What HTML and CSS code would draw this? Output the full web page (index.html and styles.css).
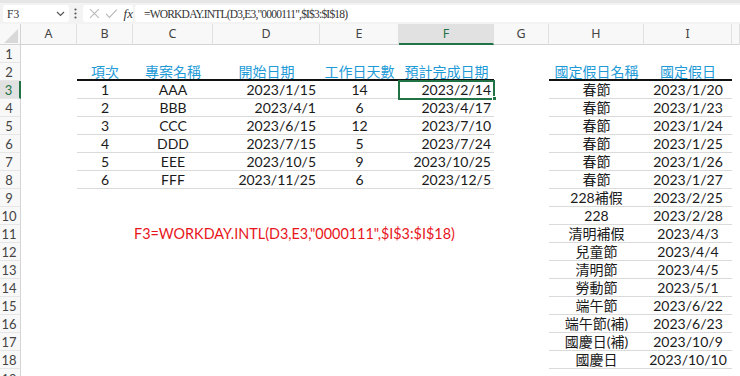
FILE: index.html
```html
<!DOCTYPE html>
<html lang="zh-Hant">
<head>
<meta charset="utf-8">
<title>WORKDAY.INTL</title>
<link rel="stylesheet" href="styles.css">
</head>
<body>
<div class="fbar">
  <div class="namebox">
    <span class="name">F3</span>
    <svg class="chev" width="9" height="6" viewBox="0 0 9 6"><path d="M1 1 L4.5 4.5 L8 1" fill="none" stroke="#555" stroke-width="1.2"/></svg>
  </div>
  <svg class="grip" width="3" height="11" viewBox="0 0 3 11"><circle cx="1.5" cy="1.5" r="1.1" fill="#555"/><circle cx="1.5" cy="5.5" r="1.1" fill="#555"/><circle cx="1.5" cy="9.5" r="1.1" fill="#555"/></svg>
  <div class="fbtns">
    <svg width="11" height="11" viewBox="0 0 11 11"><path d="M1 1 L10 10 M10 1 L1 10" stroke="#b8b8b8" stroke-width="1.1" fill="none"/></svg>
    <svg width="13" height="11" viewBox="0 0 13 11"><path d="M1 6 L4.5 9.5 L12 1.5" stroke="#b8b8b8" stroke-width="1.1" fill="none"/></svg>
    <span class="fx">fx</span>
  </div>
  <div class="finput">=WORKDAY.INTL(D3,E3,"0000111",$I$3:$I$18)</div>
</div>

<div class="sheet">
  <div class="row colhdr">
    <div class="corner"><span class="tri"></span></div>
    <div class="ch">A</div><div class="ch">B</div><div class="ch">C</div><div class="ch">D</div><div class="ch">E</div>
    <div class="ch sel">F</div><div class="ch">G</div><div class="ch">H</div><div class="ch">I</div><div class="ch"></div>
  </div>

  <div class="row"><div class="rh">1</div></div>

  <div class="row">
    <div class="rh">2</div>
    <div class="c cb hd">項次</div><div class="c cc hd">專案名稱</div><div class="c cd hd ctr">開始日期</div>
    <div class="c ce hd">工作日天數</div><div class="c cf hd ctr">預計完成日期</div>
    <div class="c ch2 hd">國定假日名稱</div><div class="c ci hd">國定假日</div>
  </div>

  <div class="row">
    <div class="rh rsel">3</div>
    <div class="c cb t">1</div><div class="c cc t">AAA</div><div class="c cd t r">2023/1/15</div>
    <div class="c ce t">14</div><div class="c cf t r active">2023/2/14<span class="handle"></span></div>
    <div class="c ch2 t">春節</div><div class="c ci t">2023/1/20</div>
  </div>

  <div class="row">
    <div class="rh">4</div>
    <div class="c cb t">2</div><div class="c cc t">BBB</div><div class="c cd t r">2023/4/1</div>
    <div class="c ce t">6</div><div class="c cf t r">2023/4/17</div>
    <div class="c ch2 t">春節</div><div class="c ci t">2023/1/23</div>
  </div>

  <div class="row">
    <div class="rh">5</div>
    <div class="c cb t">3</div><div class="c cc t">CCC</div><div class="c cd t r">2023/6/15</div>
    <div class="c ce t">12</div><div class="c cf t r">2023/7/10</div>
    <div class="c ch2 t">春節</div><div class="c ci t">2023/1/24</div>
  </div>

  <div class="row">
    <div class="rh">6</div>
    <div class="c cb t">4</div><div class="c cc t">DDD</div><div class="c cd t r">2023/7/15</div>
    <div class="c ce t">5</div><div class="c cf t r">2023/7/24</div>
    <div class="c ch2 t">春節</div><div class="c ci t">2023/1/25</div>
  </div>

  <div class="row">
    <div class="rh">7</div>
    <div class="c cb t">5</div><div class="c cc t">EEE</div><div class="c cd t r">2023/10/5</div>
    <div class="c ce t">9</div><div class="c cf t r">2023/10/25</div>
    <div class="c ch2 t">春節</div><div class="c ci t">2023/1/26</div>
  </div>

  <div class="row">
    <div class="rh">8</div>
    <div class="c cb t">6</div><div class="c cc t">FFF</div><div class="c cd t r">2023/11/25</div>
    <div class="c ce t">6</div><div class="c cf t r">2023/12/5</div>
    <div class="c ch2 t">春節</div><div class="c ci t">2023/1/27</div>
  </div>

  <div class="row">
    <div class="rh">9</div>
    <div class="c ch2 t">228補假</div><div class="c ci t">2023/2/25</div>
  </div>

  <div class="row">
    <div class="rh">10</div>
    <div class="c ch2 t">228</div><div class="c ci t">2023/2/28</div>
  </div>

  <div class="row">
    <div class="rh">11</div>
    <div class="c cc note">F3=WORKDAY.INTL(D3,E3,"0000111",$I$3:$I$18)</div>
    <div class="c ch2 t">清明補假</div><div class="c ci t">2023/4/3</div>
  </div>

  <div class="row">
    <div class="rh">12</div>
    <div class="c ch2 t">兒童節</div><div class="c ci t">2023/4/4</div>
  </div>

  <div class="row">
    <div class="rh">13</div>
    <div class="c ch2 t">清明節</div><div class="c ci t">2023/4/5</div>
  </div>

  <div class="row">
    <div class="rh">14</div>
    <div class="c ch2 t">勞動節</div><div class="c ci t">2023/5/1</div>
  </div>

  <div class="row">
    <div class="rh">15</div>
    <div class="c ch2 t">端午節</div><div class="c ci t">2023/6/22</div>
  </div>

  <div class="row">
    <div class="rh">16</div>
    <div class="c ch2 t">端午節(補)</div><div class="c ci t">2023/6/23</div>
  </div>

  <div class="row">
    <div class="rh">17</div>
    <div class="c ch2 t">國慶日(補)</div><div class="c ci t">2023/10/9</div>
  </div>

  <div class="row">
    <div class="rh">18</div>
    <div class="c ch2 t">國慶日</div><div class="c ci t">2023/10/10</div>
  </div>

  <div class="row">
    <div class="rh rcut">19</div>
  </div>
</div>
</body>
</html>
```

FILE: styles.css
```css
* { box-sizing: border-box; }

html, body {
  margin: 0;
  padding: 0;
  background: #ffffff;
  overflow: hidden;
}

body {
  width: 740px;
  height: 376px;
  font-family: "Lato", "Noto Sans CJK TC", sans-serif;
  color: #222;
}

/* ---------- formula bar ---------- */
.fbar {
  height: 24px;
  display: flex;
  align-items: center;
  padding: 0 0 0 3px;
  background: #f3f3f3;
  border-top: 3px solid #e6e6e6;
}

.namebox {
  width: 66px;
  height: 17px;
  background: #fff;
  border-radius: 3px;
  display: flex;
  align-items: center;
  justify-content: space-between;
  padding: 0 4px;
}

.name, .finput {
  font-family: "Liberation Serif", serif;
  font-size: 11.5px;
  color: #333;
}

.grip {
  margin: 0 6px 0 5px;
}

.fbtns {
  width: 50px;
  height: 17px;
  background: #fff;
  border-radius: 3px;
  display: flex;
  align-items: center;
  gap: 5px;
  padding-left: 6px;
}

.fx {
  font-family: "Liberation Serif", serif;
  font-style: italic;
  font-size: 13px;
  color: #333;
  margin-left: 1px;
}

.finput {
  flex: 1;
  height: 17px;
  margin-left: 2px;
  background: #fff;
  border-radius: 3px 0 0 3px;
  display: flex;
  align-items: center;
  padding-left: 9px;
  letter-spacing: -0.8px;
  white-space: nowrap;
}

/* ---------- sheet ---------- */
.sheet {
  display: flex;
  flex-direction: column;
}

.row {
  display: grid;
  grid-template-columns: 21px 56px 56px 80px 107px 79px 95px 55px 95px 88px 1fr;
  grid-template-rows: 18px;
  height: 18px;
}

.row.colhdr {
  height: 21px;
  grid-template-rows: 21px;
  background: #f8f8f8;
  border-bottom: 1px solid #d4d4d4;
}

.corner {
  position: relative;
  border-right: 1px solid #d4d4d4;
}

.tri {
  position: absolute;
  right: 2px;
  bottom: 2px;
  width: 14px;
  height: 14px;
  background: #d8d8d8;
  clip-path: polygon(100% 0, 100% 100%, 0 100%);
}

.ch {
  font-family: "Noto Sans", sans-serif;
  font-size: 12.5px;
  color: #444;
  text-align: center;
  line-height: 20px;
  border-right: 1px solid #e0e0e0;
}

.ch.sel {
  background: #e1e1e1;
  color: #217346;
  border-bottom: 2px solid #217346;
}

.rh {
  grid-column: 1;
  font-family: "Lato", sans-serif;
  font-size: 13px;
  color: #444;
  text-align: center;
  line-height: 18px;
  background: #f8f8f8;
  border-right: 1px solid #d4d4d4;
  border-bottom: 1px solid #e6e6e6;
  padding-right: 2px;
}

.rh.rsel {
  background: #e1e1e1;
  color: #217346;
  border-right: 2px solid #217346;
}

.rh.rcut {
  line-height: 20px;
  overflow: hidden;
}

/* cells */
.c {
  font-size: 14px;
  line-height: 18px;
  text-align: center;
  white-space: nowrap;
  color: #1a1a1a;
}

.cb { grid-column: 3; }
.cc { grid-column: 4; }
.cd { grid-column: 5; }
.ce { grid-column: 6; }
.cf { grid-column: 7; }
.ch2 { grid-column: 9; }
.ci { grid-column: 10; }

.hd {
  font-family: "Noto Sans CJK TC", sans-serif;
  font-size: 14px;
  color: #1e9bd7;
  border-bottom: 2px solid #111;
  line-height: 17px;
}

.t {
  border-bottom: 1px solid #dadada;
}

.r {
  text-align: right;
  padding-right: 4px;
}

.cf.r { padding-right: 3px; }

.active {
  position: relative;
  outline: 2px solid #217346;
  outline-offset: -1px;
  z-index: 1;
}

.handle {
  position: absolute;
  right: -3px;
  bottom: -3px;
  width: 5px;
  height: 5px;
  background: #217346;
  border: 1px solid #fff;
}

.note {
  text-align: left;
  padding-left: 1px;
  font-size: 14.4px;
  color: #e8161c;
  overflow: visible;
}
```
